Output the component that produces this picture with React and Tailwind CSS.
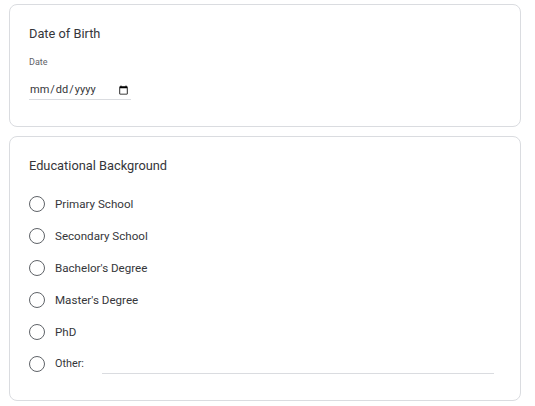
import React from "react";

const options = ["Primary School", "Secondary School", "Bachelor's Degree", "Master's Degree", "PhD"];

function Radio() {
  return <span className="block w-[16px] h-[16px] rounded-full border-[1.5px] border-[#5f6368] shrink-0" />;
}

export default function App() {
  return (
    <div className="w-[535px] h-[406px] bg-white pt-[4px] font-['Roboto',sans-serif] text-[#35363a]">
      <div className="ml-[9px] w-[512px] flex flex-col gap-[9px]">
        <div className="h-[123px] border border-[#dadce0] rounded-[8px] px-[19px] pt-[19px]">
          <div className="text-[12.8px] leading-[20px]">Date of Birth</div>
          <div className="mt-[12px] text-[9px] leading-[12px] text-[#5f6368]">Date</div>
          <input
            type="date"
            className="mt-[14px] block w-[102px] h-[18px] text-[11px] text-[#35363a] border-b border-[#dadce0] outline-none bg-transparent font-['Roboto',sans-serif]"
          />
        </div>
        <div className="h-[265px] border border-[#dadce0] rounded-[8px] px-[19px] pt-[19px]">
          <div className="text-[12.8px] leading-[20px]">Educational Background</div>
          <div className="mt-[12px] flex flex-col">
            {options.map((o) => (
              <div key={o} className="h-[32px] flex items-center">
                <Radio />
                <span className="ml-[10px] text-[11.6px] leading-[16px]">{o}</span>
              </div>
            ))}
            <div className="h-[32px] flex items-center">
              <Radio />
              <span className="ml-[10px] text-[10.8px] leading-[16px]">Other:</span>
              <div className="ml-[18px] w-[392px] h-[20px] border-b border-[#dadce0]" />
            </div>
          </div>
        </div>
      </div>
    </div>
  );
}
